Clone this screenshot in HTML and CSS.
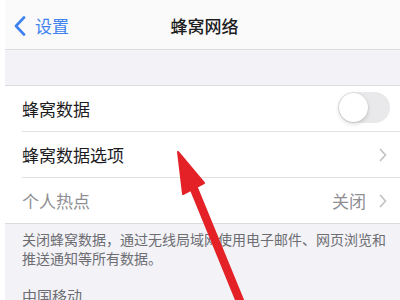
FILE: index.html
```html
<!DOCTYPE html>
<html lang="zh-CN">
<head>
<meta charset="utf-8">
<link rel="stylesheet" href="styles.css">
</head>
<body>
<div class="screen">
  <header class="nav">
    <div class="back">
      <svg class="back-icon" width="12" height="20" viewBox="0 0 12 20"><path d="M10 1.5 L2 10 L10 18.5" fill="none" stroke="#3d82f0" stroke-width="2.6" stroke-linecap="round" stroke-linejoin="round"/></svg>
      <span class="back-label">设置</span>
    </div>
    <div class="title">蜂窝网络</div>
  </header>
  <main class="content">
    <div class="spacer"></div>
    <div class="group">
      <div class="row">
        <span class="label">蜂窝数据</span>
        <span class="toggle"><span class="knob"></span></span>
      </div>
      <div class="row">
        <span class="label">蜂窝数据选项</span>
        <svg class="chev" width="8" height="14" viewBox="0 0 8 14"><path d="M1.5 1.5 L6.5 7 L1.5 12.5" fill="none" stroke="#c4c4c8" stroke-width="1.8" stroke-linecap="round" stroke-linejoin="round"/></svg>
      </div>
      <div class="row last">
        <span class="label dim">个人热点</span>
        <span class="value">关闭</span>
        <svg class="chev" width="8" height="14" viewBox="0 0 8 14"><path d="M1.5 1.5 L6.5 7 L1.5 12.5" fill="none" stroke="#c4c4c8" stroke-width="1.8" stroke-linecap="round" stroke-linejoin="round"/></svg>
      </div>
    </div>
    <p class="footer">关闭蜂窝数据，通过无线局域网使用电子邮件、网页浏览和推送通知等所有数据。</p>
    <p class="carrier">中国移动</p>
  </main>
  <svg class="arrow" width="400" height="300" viewBox="0 0 400 300">
    <line x1="192" y1="184" x2="242" y2="306" stroke="#e32126" stroke-width="8.5" stroke-linecap="round"/>
    <polygon points="178,152 204,183 183,194" fill="#e32126" stroke="#e32126" stroke-width="2" stroke-linejoin="round"/>
  </svg>
</div>
</body>
</html>
```
FILE: styles.css
```css
* { box-sizing: border-box; }
html, body { margin: 0; padding: 0; }
body {
  width: 400px;
  height: 300px;
  overflow: hidden;
  background: #ffffff;
  font-family: "Noto Sans CJK SC", "Noto Sans", sans-serif;
}
.screen {
  position: relative;
  width: 400px;
  height: 300px;
  overflow: hidden;
}
.nav {
  position: relative;
  height: 50px;
  background: #fafafa;
  border-bottom: 1px solid #dcdcdf;
  margin-left: 5px;
  display: flex;
  align-items: center;
}
.back {
  display: flex;
  align-items: center;
  gap: 9px;
  padding-left: 9px;
  padding-top: 2px;
}
.back-icon { display: block; }
.back-label {
  font-size: 17px;
  color: #3d82f0;
  line-height: 20px;
}
.title {
  position: absolute;
  left: 0;
  right: 0;
  top: 15px;
  text-align: center;
  font-size: 17px;
  font-weight: 500;
  color: #1c1c1e;
  line-height: 22px;
  padding-left: 4px;
}
.content {
  margin-left: 5px;
  background: #f2f2f7;
  height: 250px;
}
.spacer { height: 35px; }
.group {
  background: #ffffff;
  border-top: 1px solid #dcdcdf;
  border-bottom: 1px solid #dcdcdf;
}
.row {
  height: 46px;
  display: flex;
  align-items: center;
  margin-left: 17px;
  padding-right: 13px;
  border-bottom: 1px solid #e3e3e6;
}
.row.last { border-bottom: none; height: 45px; }
.label {
  flex: 1;
  font-size: 17px;
  color: #1c1c1e;
  line-height: 22px;
}
.label.dim { color: #8e8e93; }
.value {
  font-size: 17px;
  color: #8e8e93;
  margin-right: 13px;
  line-height: 22px;
}
.chev { display: block; }
.toggle {
  width: 52px;
  height: 31px;
  border-radius: 16px;
  background: #e9e9eb;
  position: relative;
  margin-right: -3px;
  margin-top: -2px;
}
.knob {
  position: absolute;
  left: 1px;
  top: 1px;
  width: 29px;
  height: 29px;
  border-radius: 50%;
  background: #ffffff;
  box-shadow: 0 0 0 0.5px rgba(0,0,0,0.08), 0 2px 4px rgba(0,0,0,0.15);
}
.footer {
  margin: 0;
  padding: 6px 14px 0 17px;
  font-size: 14px;
  line-height: 19px;
  color: #6d6d72;
}
.carrier {
  margin: 0;
  padding: 18px 0 0 17px;
  font-size: 15px;
  line-height: 20px;
  color: #6d6d72;
}
.arrow {
  position: absolute;
  left: 0;
  top: 0;
  pointer-events: none;
}
```
